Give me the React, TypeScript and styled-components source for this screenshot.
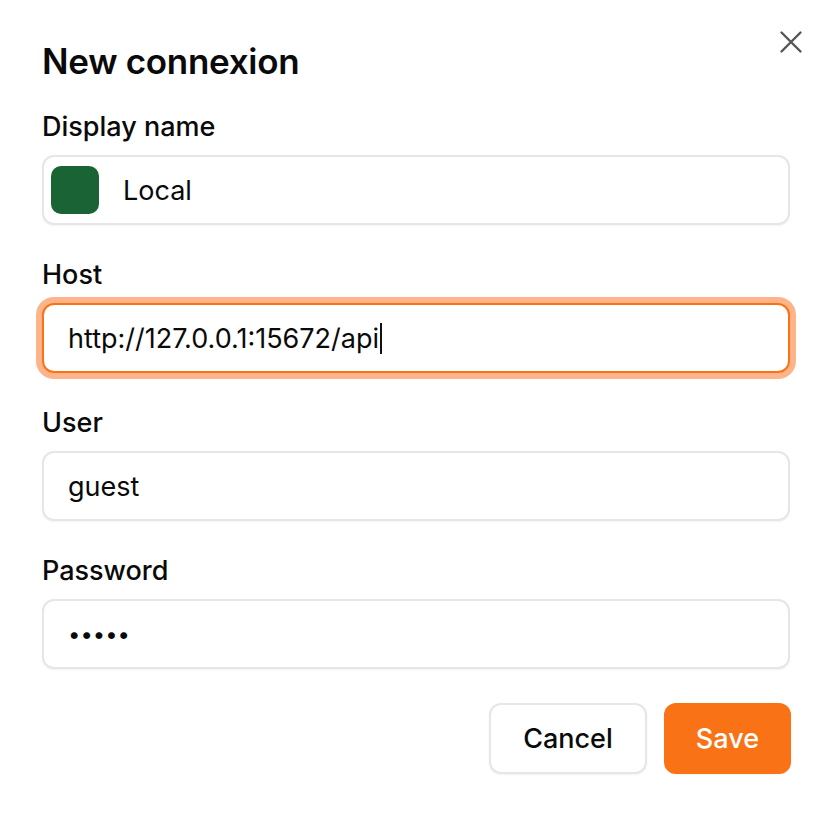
import React from "react";
import styled, { createGlobalStyle } from "styled-components";

const GlobalStyle = createGlobalStyle`
  html, body {
    margin: 0;
    padding: 0;
    background: #fff;
  }
  body {
    font-family: Inter, "Noto Sans", "Liberation Sans", sans-serif;
    color: #0a0a0a;
  }
`;

const Dialog = styled.div`
  width: 832px;
  height: 818px;
  box-sizing: border-box;
  padding: 40px 42px 0 42px;
  display: flex;
  flex-direction: column;
  background: #fff;
`;

const Header = styled.div`
  display: flex;
  justify-content: space-between;
  align-items: flex-start;
`;

const Title = styled.h2`
  margin: 0;
  font-size: 35px;
  line-height: 42px;
  font-weight: 600;
  letter-spacing: -0.3px;
`;

const CloseButton = styled.button`
  border: none;
  background: none;
  padding: 0;
  margin: -10px -13px 0 0;
  width: 24px;
  height: 24px;
  color: #555;
  display: flex;
  align-items: center;
  justify-content: center;
  cursor: pointer;
`;

const Form = styled.div`
  display: flex;
  flex-direction: column;
  gap: 34px;
  margin-top: 29px;
`;

const Field = styled.div`
  display: flex;
  flex-direction: column;
  gap: 12px;
`;

const Label = styled.label`
  font-size: 27px;
  line-height: 32px;
  font-weight: 500;
`;

const InputBox = styled.div<{ $focused?: boolean }>`
  height: 70px;
  box-sizing: border-box;
  border-radius: 12px;
  border: 2px solid ${(p) => (p.$focused ? "#f97316" : "#e6e6e6")};
  box-shadow: ${(p) =>
    p.$focused
      ? "0 0 0 6px #fdb48b"
      : "0 1px 2px rgba(0, 0, 0, 0.05)"};
  display: flex;
  align-items: center;
  gap: 24px;
  padding: 0 24px;
  background: #fff;
  font-size: 27px;
`;

const Swatch = styled.span`
  width: 48px;
  height: 48px;
  border-radius: 10px;
  background: #196334;
  margin-left: -17px;
  flex-shrink: 0;
`;

const Value = styled.span`
  display: flex;
  align-items: center;
`;

const Caret = styled.span`
  display: inline-block;
  width: 2px;
  height: 31px;
  background: #111;
  margin-left: 1px;
`;

const Dots = styled.span`
  letter-spacing: 0;
  font-size: 22px;
`;

const Actions = styled.div`
  display: flex;
  justify-content: flex-end;
  gap: 17px;
  margin-top: 34px;
  margin-right: -1px;
`;

const Button = styled.button<{ $primary?: boolean }>`
  height: 71px;
  box-sizing: border-box;
  padding: 0 ${(p) => (p.$primary ? "30px" : "32px")};
  border-radius: 12px;
  font-family: inherit;
  font-size: 27px;
  font-weight: 500;
  cursor: pointer;
  border: 2px solid ${(p) => (p.$primary ? "#f97316" : "#e6e6e6")};
  background: ${(p) => (p.$primary ? "#f97316" : "#fff")};
  color: ${(p) => (p.$primary ? "#fff" : "#0a0a0a")};
  box-shadow: 0 1px 2px rgba(0, 0, 0, 0.05);
`;

const App = () => {
  return (
    <>
      <GlobalStyle />
      <Dialog>
        <Header>
          <Title>New connexion</Title>
          <CloseButton aria-label="Close">
            <svg width="24" height="24" viewBox="0 0 24 24" fill="none" stroke="currentColor" strokeWidth="2.4" strokeLinecap="round">
              <path d="M2.5 2.5L21.5 21.5M21.5 2.5L2.5 21.5" />
            </svg>
          </CloseButton>
        </Header>
        <Form>
          <Field>
            <Label>Display name</Label>
            <InputBox>
              <Swatch />
              <Value>Local</Value>
            </InputBox>
          </Field>
          <Field>
            <Label>Host</Label>
            <InputBox $focused>
              <Value>
                http://127.0.0.1:15672/api
                <Caret />
              </Value>
            </InputBox>
          </Field>
          <Field>
            <Label>User</Label>
            <InputBox>
              <Value>guest</Value>
            </InputBox>
          </Field>
          <Field>
            <Label>Password</Label>
            <InputBox>
              <Dots>•••••</Dots>
            </InputBox>
          </Field>
        </Form>
        <Actions>
          <Button>Cancel</Button>
          <Button $primary>Save</Button>
        </Actions>
      </Dialog>
    </>
  );
};

export default App;
